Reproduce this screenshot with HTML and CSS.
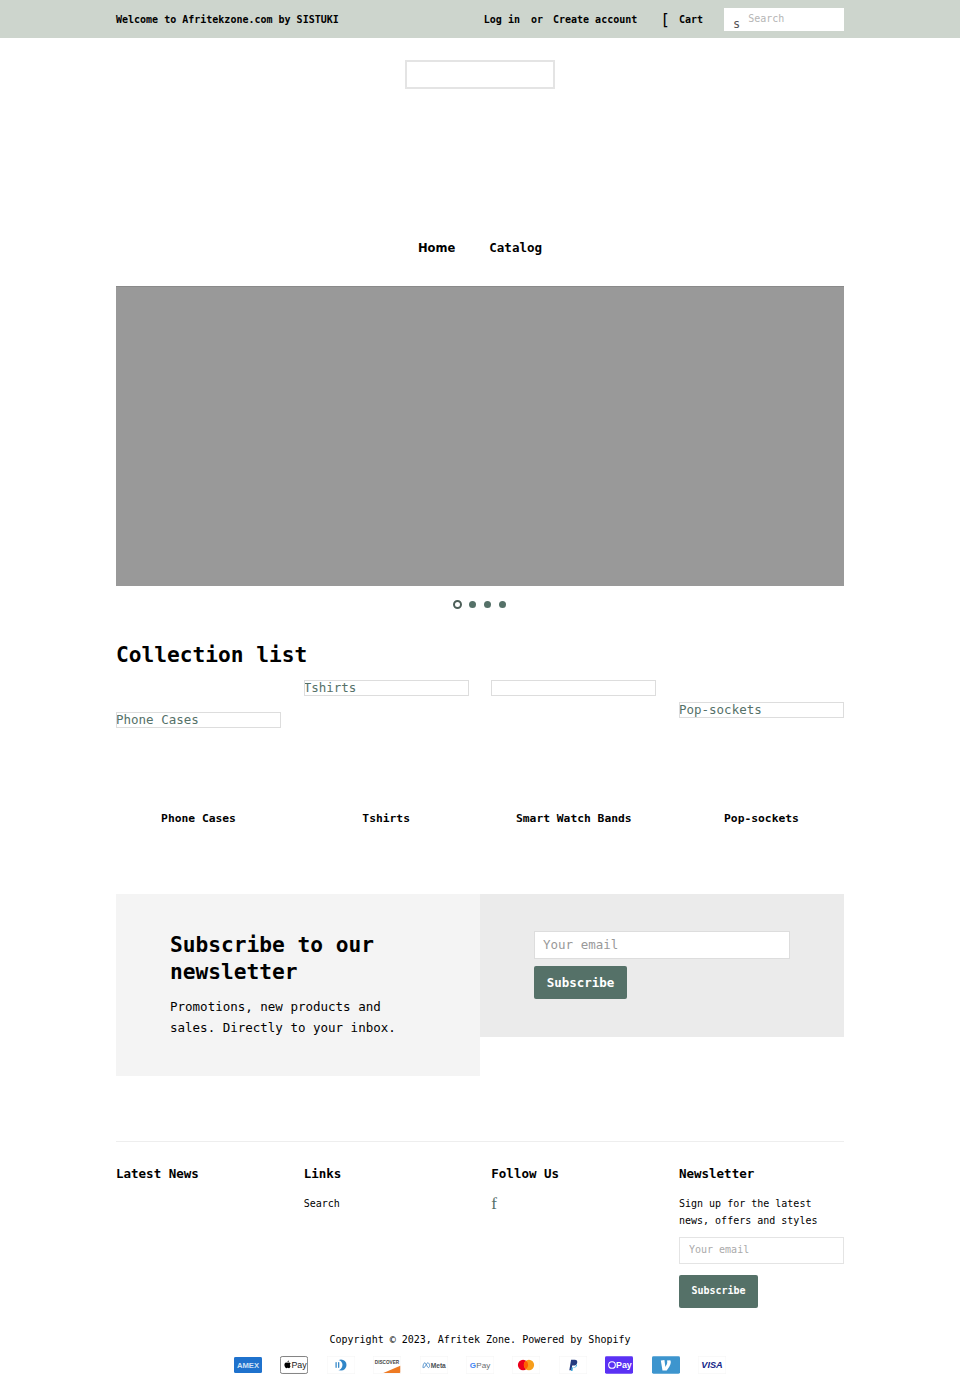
FILE: index.html
```html
<!DOCTYPE html>
<html lang="en">
<head>
  <meta charset="UTF-8">
  <meta name="viewport" content="width=device-width, initial-scale=1.0">
  <title>Afritek Zone</title>
  <link rel="stylesheet" href="styles.css">
</head>
<body>
  <div class="topbar">
    <div class="wrapper topbar-inner">
      <div class="welcome">Welcome to Afritekzone.com by SISTUKI</div>
      <div class="account">
        <a href="#">Log in</a>
        <span class="account-or">or</span>
        <a href="#">Create account</a>
      </div>
      <a class="cart" href="#"><span class="cart-icon">[</span>Cart</a>
      <form class="search">
        <span class="search-icon">s</span>
        <input class="search-input" type="text" placeholder="Search">
      </form>
    </div>
  </div>

  <div class="wrapper">
    <div class="logo"></div>
    <nav class="nav">
      <a class="nav-home" href="#">Home</a>
      <a href="#">Catalog</a>
    </nav>

    <div class="hero"></div>
    <div class="dots">
      <span class="dot dot-active"></span>
      <span class="dot"></span>
      <span class="dot"></span>
      <span class="dot"></span>
    </div>

    <h2 class="section-title">Collection list</h2>
    <div class="collections">
      <a class="tile" href="#">
        <div class="tile-image"><div class="tile-box tile-box-phone">Phone Cases</div></div>
        <div class="tile-label">Phone Cases</div>
      </a>
      <a class="tile" href="#">
        <div class="tile-image"><div class="tile-box">Tshirts</div></div>
        <div class="tile-label">Tshirts</div>
      </a>
      <a class="tile" href="#">
        <div class="tile-image"><div class="tile-box"></div></div>
        <div class="tile-label">Smart Watch Bands</div>
      </a>
      <a class="tile" href="#">
        <div class="tile-image"><div class="tile-box tile-box-pop">Pop-sockets</div></div>
        <div class="tile-label">Pop-sockets</div>
      </a>
    </div>

    <div class="signup">
      <div class="signup-text">
        <h2 class="signup-title">Subscribe to our newsletter</h2>
        <p class="signup-copy">Promotions, new products and sales. Directly to your inbox.</p>
      </div>
      <form class="signup-form">
        <input class="signup-input" type="email" placeholder="Your email">
        <button class="signup-btn" type="button">Subscribe</button>
      </form>
    </div>

    <footer class="footer">
      <div class="footer-cols">
        <div>
          <h4 class="footer-title">Latest News</h4>
        </div>
        <div>
          <h4 class="footer-title">Links</h4>
          <a class="footer-link" href="#">Search</a>
        </div>
        <div>
          <h4 class="footer-title">Follow Us</h4>
          <a class="social" href="#">f</a>
        </div>
        <div>
          <h4 class="footer-title">Newsletter</h4>
          <p class="footer-copy">Sign up for the latest news, offers and styles</p>
          <input class="footer-input" type="email" placeholder="Your email">
          <button class="footer-btn" type="button">Subscribe</button>
        </div>
      </div>

      <div class="copyright">Copyright © 2023, Afritek Zone. Powered by Shopify</div>

      <div class="payments">
        <svg class="pay" viewBox="0 0 38 24" aria-label="American Express">
          <rect y="1" width="38" height="22" rx="2" fill="#1f72cd"/>
          <text x="19" y="16" text-anchor="middle" class="pay-text" font-size="10.500" font-weight="700" textLength="30" lengthAdjust="spacingAndGlyphs" fill="#cfe2f6">AMEX</text>
        </svg>
        <svg class="pay" viewBox="0 0 38 24" aria-label="Apple Pay">
          <rect x=".5" y=".5" width="37" height="23" rx="2.5" fill="#fff" stroke="#555"/>
          <path d="M11.6 7.6c-.4.5-1 .8-1.500.8-.1-.6.2-1.200.5-1.600.4-.5 1-.8 1.500-.8 0 .6-.2 1.100-.5 1.600zm.5.9c-.8 0-1.500.5-1.900.5s-1-.5-1.700-.5c-.9 0-1.700.5-2.100 1.300-.9 1.600-.2 3.900.7 5.200.4.600.9 1.300 1.600 1.300.6 0 .9-.4 1.700-.4s1 .4 1.700.4 1.100-.6 1.500-1.300c.5-.7.7-1.400.7-1.500-.9-.4-1.500-2.900.2-3.700-.5-.8-1.500-1.300-2.400-1.300z" fill="#000"/>
          <text x="15.500" y="16.500" class="pay-text" font-size="12" fill="#222">Pay</text>
        </svg>
        <svg class="pay" viewBox="0 0 38 24" aria-label="Diners Club">
          <rect width="38" height="24" rx="2" fill="#fff" stroke="#f3f3f3"/>
          <circle cx="19" cy="12" r="7.500" fill="#3086c8"/>
          <circle cx="14" cy="12" r="7" fill="#fff"/>
          <rect x="11.500" y="8" width="1.700" height="8" rx=".8" fill="#3086c8"/>
          <rect x="15" y="8" width="1.700" height="8" rx=".8" fill="#3086c8"/>
        </svg>
        <svg class="pay" viewBox="0 0 38 24" aria-label="Discover">
          <rect width="38" height="24" rx="2" fill="#fff" stroke="#f3f3f3"/>
          <path d="M14 23 L37 13 V22 a1 1 0 0 1 -1 1 Z" fill="#ee7a23"/>
          <text x="19" y="10.500" text-anchor="middle" class="pay-text" font-size="6.500" font-weight="700" textLength="33" lengthAdjust="spacingAndGlyphs" fill="#444">DISCOVER</text>
        </svg>
        <svg class="pay" viewBox="0 0 38 24" aria-label="Meta Pay">
          <rect width="38" height="24" rx="2" fill="#fff" stroke="#f3f3f3"/>
          <path d="M4 15.500c0-3 1-6.500 2.500-6.500 2 0 3 6.500 5 6.500 1 0 1.500-1 1.500-2.800S12 9 10.500 9 7 15.500 5.500 15.500 4 15.500 4 15.500z" fill="none" stroke="#3b82c4" stroke-width="1.100"/>
          <text x="14.500" y="15.500" class="pay-text" font-size="9" font-weight="700" fill="#4a4f55">Meta</text>
        </svg>
        <svg class="pay" viewBox="0 0 38 24" aria-label="Google Pay">
          <rect width="38" height="24" rx="2" fill="#fff" stroke="#f3f3f3"/>
          <text x="5" y="16" class="pay-text" font-size="11" font-weight="700" fill="#4285f4">G</text>
          <text x="14" y="16" class="pay-text" font-size="11" fill="#6a6e72">Pay</text>
        </svg>
        <svg class="pay" viewBox="0 0 38 24" aria-label="Mastercard">
          <rect width="38" height="24" rx="2" fill="#fff" stroke="#f3f3f3"/>
          <circle cx="15" cy="12" r="7" fill="#eb001b"/>
          <circle cx="23" cy="12" r="7" fill="#f79e1b"/>
          <path d="M19 6.300a7 7 0 0 1 0 11.400a7 7 0 0 1 0-11.400z" fill="#ff5f00"/>
        </svg>
        <svg class="pay" viewBox="0 0 38 24" aria-label="PayPal">
          <rect width="38" height="24" rx="2" fill="#fff" stroke="#f3f3f3"/>
          <path d="M14 19l2.400-14h5c2.600 0 3.800 1.500 3.300 3.800-.5 2.500-2.400 3.900-4.800 3.900h-2l-.9 6.300z" fill="#253b80"/>
          <path d="M16.500 20l.7-4.500h2.200c2 0 3.400-1.200 3.800-3.100.1-.6.100-1 0-1.400l1.200 1c-.4 2.300-2 3.800-4.200 3.800h-1.400l-.6 4.200z" fill="#179bd7"/>
        </svg>
        <svg class="pay" viewBox="0 0 38 24" aria-label="Shop Pay">
          <rect width="38" height="24" rx="2" fill="#5a31f4"/>
          <rect x="5" y="7.500" width="9" height="9" rx="4.500" fill="none" stroke="#fff" stroke-width="1.500"/>
          <text x="15" y="16.500" class="pay-text" font-size="12" font-weight="700" fill="#fff">Pay</text>
        </svg>
        <svg class="pay" viewBox="0 0 38 24" aria-label="Venmo">
          <rect width="38" height="24" rx="2" fill="#3d95ce"/>
          <path d="M24.500 6c.6 1 .8 2 .8 3.200 0 3.800-3.300 8.800-5.900 12.300h-6L11 6.400l5.200-.5 1.300 10.400c1.200-2 2.700-5 2.700-7.100 0-1.100-.2-1.900-.5-2.500z" transform="translate(1.500 0) scale(.95 .9)" fill="#fff"/>
        </svg>
        <svg class="pay" viewBox="0 0 38 24" aria-label="Visa">
          <rect width="38" height="24" rx="2" fill="#fff" stroke="#f3f3f3"/>
          <text x="19" y="16.500" text-anchor="middle" class="pay-text" font-size="12.500" font-weight="700" font-style="italic" fill="#142688">VISA</text>
        </svg>
      </div>
    </footer>
  </div>
</body>
</html>
```

FILE: styles.css
```css
* {
  box-sizing: border-box;
}

body {
  margin: 0;
  font-family: "DejaVu Sans Mono", monospace;
  font-size: 10px;
  color: #000;
  background-color: #fff;
}

a {
  color: inherit;
  text-decoration: none;
}

.wrapper {
  width: 728px;
  margin: 0 auto;
}

/* top bar */
.topbar {
  height: 38px;
  background-color: #cdd5cd;
}

.topbar-inner {
  display: flex;
  align-items: center;
  height: 38px;
}

.welcome {
  font-weight: 700;
  margin-right: auto;
}

.account {
  font-weight: 700;
  display: flex;
}

.account-or {
  margin: 0 10px 0 11px;
}

.cart {
  display: flex;
  align-items: center;
  font-weight: 700;
  margin-left: 23px;
}

.cart-icon {
  font-size: 16px;
  font-weight: 400;
  margin-right: 9px;
}

.search {
  display: flex;
  align-items: flex-end;
  width: 120px;
  height: 23px;
  margin-left: 21px;
  padding-left: 9px;
  background-color: #fff;
}

.search-icon {
  font-size: 12px;
  line-height: 14px;
  color: #555;
}

.search-input {
  width: 90px;
  height: 21px;
  margin-left: 8px;
  margin-bottom: 1px;
  padding: 0;
  border: none;
  outline: none;
  font-family: inherit;
  font-size: 10px;
  align-self: flex-start;
}

.search-input::placeholder {
  color: #b5b5b5;
}

/* logo and nav */
.logo {
  width: 150px;
  height: 29px;
  margin: 22px auto 0;
  border: 2px solid #e4e4e4;
}

.nav {
  display: flex;
  justify-content: center;
  gap: 34px;
  margin-top: 149px;
  font-size: 12.5px;
  font-weight: 700;
  line-height: 20px;
}

.nav-home {
  font-family: "DejaVu Sans", sans-serif;
  font-size: 11.500px;
}

/* slideshow */
.hero {
  height: 300px;
  margin-top: 28px;
  background-color: #999;
  border-top: 1px solid #8a8a8a;
}

.dots {
  display: flex;
  justify-content: center;
  align-items: center;
  gap: 8px;
  height: 9px;
  margin-top: 14px;
  padding-right: 1px;
}

.dot {
  width: 7px;
  height: 7px;
  border-radius: 50%;
  background-color: #557168;
}

.dot-active {
  width: 9px;
  height: 9px;
  margin-right: -1px;
  background-color: #fff;
  border: 2px solid #4d5f59;
}

/* collection list */
.section-title {
  margin: 32px 0 0;
  font-size: 21.200px;
  line-height: 28px;
}

.collections {
  display: grid;
  grid-template-columns: repeat(4, 165px);
  justify-content: space-between;
  margin-top: 11px;
}

.tile {
  display: block;
}

.tile-image {
  display: flow-root;
  height: 131px;
}

.tile-box {
  height: 16px;
  border: 1px solid #ddd;
  font-size: 12.5px;
  line-height: 13px;
  text-indent: -1px;
  color: #557168;
  white-space: nowrap;
  overflow: hidden;
}

.tile-box-phone {
  margin-top: 32px;
}

.tile-box-pop {
  margin-top: 22px;
}

.tile-label {
  font-size: 11.300px;
  font-weight: 700;
  line-height: 16px;
  text-align: center;
}

/* newsletter band */
.signup {
  display: flex;
  align-items: flex-start;
  margin-top: 67px;
}

.signup-text {
  width: 364px;
  height: 182px;
  padding: 37px 54px 0;
  background-color: #f4f4f4;
}

.signup-title {
  margin: 0;
  font-size: 21.200px;
  line-height: 27px;
}

.signup-copy {
  margin: 11px 0 0;
  font-size: 12.500px;
  line-height: 21px;
}

.signup-form {
  width: 364px;
  height: 143px;
  padding: 37px 54px 0;
  background-color: #ebebeb;
}

.signup-input {
  display: block;
  width: 256px;
  height: 28px;
  padding: 0 8px 2px;
  border: 1px solid #ddd;
  background-color: #fff;
  font-family: inherit;
  font-size: 12.500px;
}

.signup-input::placeholder {
  color: #999;
}

.signup-btn {
  display: block;
  width: 93px;
  height: 33px;
  margin-top: 7px;
  padding: 0;
  border: none;
  border-radius: 2px;
  background-color: #557168;
  color: #fff;
  font-family: inherit;
  font-size: 12.500px;
  font-weight: 700;
  cursor: pointer;
}

/* footer */
.footer {
  margin-top: 65px;
  padding-top: 24px;
  border-top: 1px solid #eee;
}

.footer-cols {
  display: grid;
  grid-template-columns: repeat(4, 165px);
  justify-content: space-between;
}

.footer-title {
  margin: 0;
  font-size: 12.500px;
  line-height: 16px;
  font-weight: 700;
}

.footer-link {
  display: block;
  margin-top: 13px;
  line-height: 17px;
}

.social {
  display: block;
  margin-top: 13px;
  font-family: "Liberation Serif", serif;
  font-size: 17px;
  line-height: 17px;
  color: #557168;
}

.footer-copy {
  margin: 13px 0 0;
  line-height: 17px;
}

.footer-input {
  display: block;
  width: 165px;
  height: 27px;
  margin-top: 8px;
  padding: 0 9px 2px;
  border: 1px solid #e4e4e4;
  background-color: #fff;
  font-family: inherit;
  font-size: 10px;
}

.footer-input::placeholder {
  color: #aaa;
}

.footer-btn {
  display: block;
  width: 79px;
  height: 33px;
  margin-top: 11px;
  padding: 0 0 2px;
  border: none;
  border-radius: 2px;
  background-color: #557168;
  color: #fff;
  font-family: inherit;
  font-size: 10px;
  font-weight: 700;
  cursor: pointer;
}

.copyright {
  margin-top: 25px;
  line-height: 14px;
  text-align: center;
}

.payments {
  display: flex;
  justify-content: center;
  gap: 18.400px;
  margin-top: 9px;
  padding-bottom: 17px;
}

.pay {
  display: block;
  width: 28px;
  height: 18px;
}

.pay-text {
  font-family: "Liberation Sans", sans-serif;
}
```
